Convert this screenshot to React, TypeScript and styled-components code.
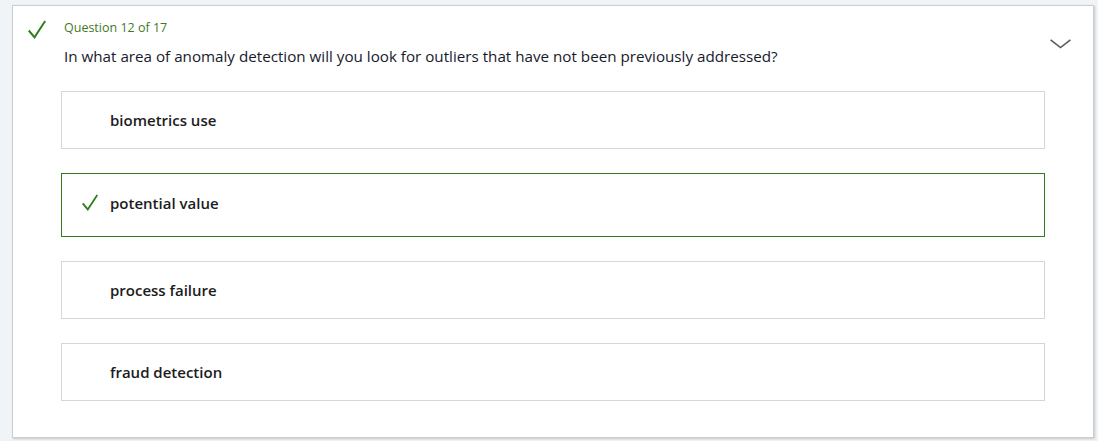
import { FC } from 'react';
import styled, { createGlobalStyle } from 'styled-components';

const GlobalStyle = createGlobalStyle`
    body {
        margin: 0;
        background: #f1f4f7;
        font-family: 'Open Sans', 'Noto Sans', sans-serif;
    }
`;

const Page = styled.div`
    padding: 5px 5px 4px 12px;
`;

const Card = styled.div`
    box-sizing: border-box;
    width: 1082px;
    height: 433px;
    display: flex;
    background: #fff;
    border: 1px solid #cdcdcd;
    box-shadow: 1px 1px 2px rgba(0, 0, 0, 0.18);
`;

const Status = styled.div`
    width: 48px;
    flex-shrink: 0;
    padding: 14px 0 0 15px;
    box-sizing: border-box;
    svg {
        display: block;
    }
`;

const Body = styled.div`
    flex: 1;
    padding-top: 13px;
`;

const Counter = styled.div`
    font-size: 12.5px;
    line-height: 17px;
    color: #3f7a1f;
    padding-left: 3px;
`;

const Question = styled.div`
    margin-top: 9px;
    font-size: 15.2px;
    line-height: 22px;
    color: #171a2b;
    padding-left: 3px;
`;

const Options = styled.div`
    margin-top: 24px;
    display: flex;
    flex-direction: column;
    gap: 24px;
`;

const Option = styled.div<{ $selected?: boolean }>`
    box-sizing: border-box;
    height: ${p => (p.$selected ? '64px' : '58px')};
    display: grid;
    grid-template-columns: 28px 1fr;
    align-items: center;
    padding: 0 0 ${p => (p.$selected ? '5px' : '0')} 20px;
    border: 1px solid ${p => (p.$selected ? '#2e7d1c' : '#d6d6d6')};
    font-size: 15px;
    font-weight: 600;
    color: #1c1c1c;
    svg {
        display: block;
        margin-top: -1px;
    }
`;

const Toggle = styled.div`
    width: 48px;
    flex-shrink: 0;
    padding: 33px 0 0 5px;
    box-sizing: border-box;
    svg {
        display: block;
    }
`;

const Check: FC<{ size: number }> = ({ size }) => (
    <svg width={size} height={size + 1} viewBox="0 0 18 19" fill="none">
        <path d="M0.8 10.5 L6.5 17.3 L17.2 1" stroke="#2e7d1c" strokeWidth="2" />
    </svg>
);

const options = [
    { label: 'biometrics use' },
    { label: 'potential value', selected: true },
    { label: 'process failure' },
    { label: 'fraud detection' },
];

const App: FC = () => (
    <Page>
        <GlobalStyle />
        <Card>
            <Status>
                <Check size={18} />
            </Status>
            <Body>
                <Counter>Question 12 of 17</Counter>
                <Question>In what area of anomaly detection will you look for outliers that have not been previously addressed?</Question>
                <Options>
                    {options.map(o => (
                        <Option key={o.label} $selected={o.selected}>
                            <span>{o.selected && <Check size={16} />}</span>
                            <span>{o.label}</span>
                        </Option>
                    ))}
                </Options>
            </Body>
            <Toggle>
                <svg width="21" height="10" viewBox="0 0 21 10" fill="none">
                    <path d="M0.6 0.8 L10.5 8.6 L20.4 0.8" stroke="#5a5a5a" strokeWidth="1.6" />
                </svg>
            </Toggle>
        </Card>
    </Page>
);

export default App;
